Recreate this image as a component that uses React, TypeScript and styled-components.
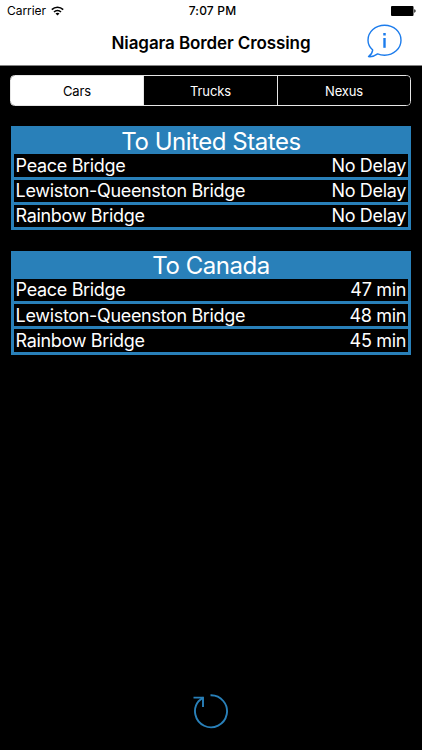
import React, { useState } from 'react';
import styled, { createGlobalStyle } from 'styled-components';

const GlobalStyle = createGlobalStyle`
  * {
    box-sizing: border-box;
  }

  body {
    margin: 0;
    background: #000;
    font-family: Inter, "Liberation Sans", sans-serif;
  }
`

const Screen = styled.div`
  display: flex;
  flex-direction: column;
  height: 750px;
  width: 422px;
  overflow: hidden;
  background: #000;
  color: #fff;
`

const Header = styled.header`
  height: 66px;
  background: #fff;
  color: #000;
  border-bottom: 1px solid #828282;
`

const StatusBar = styled.div`
  display: grid;
  grid-template-columns: 1fr auto 1fr;
  align-items: center;
  height: 22px;
  padding: 0 6px 0 7px;
  font-size: 12px;
  line-height: 22px;
`

const Carrier = styled.div`
  display: flex;
  align-items: center;
  gap: 5px;
  letter-spacing: -0.05px;
`

const Clock = styled.div`
  padding-left: 2px;
  font-weight: 500;
  letter-spacing: 0.2px;
`

const Battery = styled.svg`
  justify-self: end;
`

const NavBar = styled.div`
  display: grid;
  grid-template-columns: 60px 1fr 60px;
  align-items: center;
  height: 43px;
`

const NavTitle = styled.h1`
  grid-column: 2;
  margin: 0;
  font-size: 17px;
  font-weight: 600;
  line-height: 43px;
  letter-spacing: -0.1px;
  text-align: center;
  white-space: nowrap;
`

const InfoButton = styled.button`
  display: flex;
  width: 36px;
  height: 34px;
  margin: -5px 0 0 5px;
  padding: 0;
  border: 0;
  background: none;
`

const Content = styled.main`
  display: flex;
  flex: 1;
  flex-direction: column;
  padding: 9.4px 11px 0;
`

const Segments = styled.div`
  display: grid;
  grid-template-columns: 133fr 134fr 132fr;
  height: 31px;
  margin: 0 0 20px -1px;
  border: 1px solid #e6e6e6;
  border-radius: 4.5px;
  overflow: hidden;
`

const Segment = styled.button<{ $active: boolean }>`
  padding: 1px 0 0;
  border: 0;
  border-right: 1px solid #e6e6e6;
  background: ${({ $active }) => ($active ? '#fff' : '#000')};
  color: ${({ $active }) => ($active ? '#000' : '#fff')};
  font-family: inherit;
  font-size: 13px;
  line-height: 28px;
  letter-spacing: -0.15px;

  &:last-child {
    border-right: 0;
  }
`

const Table = styled.section`
  height: 104px;
  margin-bottom: 20.4px;
  padding: 0 3px 3px;
  background: #2980b9;
`

const TableTitle = styled.h2`
  height: 28px;
  margin: 0;
  padding-top: 0.3px;
  font-size: 24px;
  font-weight: 400;
  line-height: 30.6px;
  letter-spacing: -0.47px;
  text-align: center;
`

const Rows = styled.div`
  display: grid;
  grid-template-rows: repeat(3, 1fr);
  gap: 3px;
  height: 73px;
`

const Row = styled.div`
  display: flex;
  justify-content: space-between;
  height: 22.33px;
  padding: 0.45px 2px 0 1.6px;
  background: #000;
  font-size: 18px;
  line-height: 22.3px;
  letter-spacing: -0.33px;
`

const Footer = styled.footer`
  display: flex;
  justify-content: center;
  height: 60px;
`

const RefreshButton = styled.button`
  width: 40px;
  height: 40px;
  padding: 0;
  border: 0;
  background: none;
`

interface ICrossing {
    bridge: string;
    delay: string;
}

interface IDirectionProps {
    title: string;
    crossings: ICrossing[];
}

const tabs = ['Cars', 'Trucks', 'Nexus'];

const toUnitedStates: ICrossing[] = [
    { bridge: 'Peace Bridge', delay: 'No Delay' },
    { bridge: 'Lewiston-Queenston Bridge', delay: 'No Delay' },
    { bridge: 'Rainbow Bridge', delay: 'No Delay' },
];

const toCanada: ICrossing[] = [
    { bridge: 'Peace Bridge', delay: '47 min' },
    { bridge: 'Lewiston-Queenston Bridge', delay: '48 min' },
    { bridge: 'Rainbow Bridge', delay: '45 min' },
];

const WifiIcon = () => (
    <svg width="13" height="10" viewBox="0 0 13 10" fill="none" stroke="#000" strokeWidth="1.6">
        <path d="M0.8 3.6C4 .5 9 .5 12.2 3.6" />
        <path d="M3 6C5 4.1 8 4.1 10 6" />
        <path d="M6.5 9.6L4.5 7.5C5.7 6.5 7.3 6.5 8.5 7.5Z" fill="#000" stroke="none" />
    </svg>
);

const InfoIcon = () => (
    <svg width="36" height="34" viewBox="0 0 36 34" fill="none" stroke="#1c7cec" strokeWidth="1.4">
        <path d="M5.7 26.1C2.7 23.3 1 20 1 16.2C1 7.8 8.4 1.2 17.6 1.2S34 7.8 34 16.2S26.6 31.2 17.6 31.2C15 31.2 12.7 30.8 10.6 29.9C8 31.8 4.8 33 1.5 32.6C3.8 31 5.3 28.9 5.7 26.1Z" strokeLinejoin="round" />
        <path d="M17.5 14V23.8" strokeWidth="2.4" />
        <path d="M17.5 9V11.5" strokeWidth="2.5" />
    </svg>
);

const RefreshIcon = () => (
    <svg width="40" height="40" viewBox="0 0 40 40" fill="none" stroke="#2980b9" strokeWidth="1.9">
        <path d="M19.5 5.3A16 16 0 1 1 7.6 11.2L12 7.6" />
        <path d="M2.5 7.6H12V17" />
    </svg>
);

const Direction = ({ title, crossings }: IDirectionProps) => (
    <Table>
        <TableTitle>{title}</TableTitle>
        <Rows>
            {crossings.map(({ bridge, delay }) => (
                <Row key={bridge}>
                    <span>{bridge}</span>
                    <span>{delay}</span>
                </Row>
            ))}
        </Rows>
    </Table>
);

const App = () => {
    const [active, setActive] = useState('Cars');

    return (
        <React.Fragment>
            <GlobalStyle />
            <Screen>
                <Header>
                    <StatusBar>
                        <Carrier>Carrier <WifiIcon /></Carrier>
                        <Clock>7:07 PM</Clock>
                        <Battery width="25" height="10" viewBox="0 0 25 10">
                            <rect width="22.5" height="10" rx="1" />
                            <path d="M23.3 3.3C25 3.6 25 6.4 23.3 6.7Z" />
                        </Battery>
                    </StatusBar>
                    <NavBar>
                        <NavTitle>Niagara Border Crossing</NavTitle>
                        <InfoButton aria-label="Info"><InfoIcon /></InfoButton>
                    </NavBar>
                </Header>
                <Content>
                    <Segments>
                        {tabs.map(tab => (
                            <Segment key={tab} $active={tab === active} onClick={() => setActive(tab)}>
                                {tab}
                            </Segment>
                        ))}
                    </Segments>
                    <Direction title="To United States" crossings={toUnitedStates} />
                    <Direction title="To Canada" crossings={toCanada} />
                </Content>
                <Footer>
                    <RefreshButton aria-label="Refresh"><RefreshIcon /></RefreshButton>
                </Footer>
            </Screen>
        </React.Fragment>
    );
};

export default App;
